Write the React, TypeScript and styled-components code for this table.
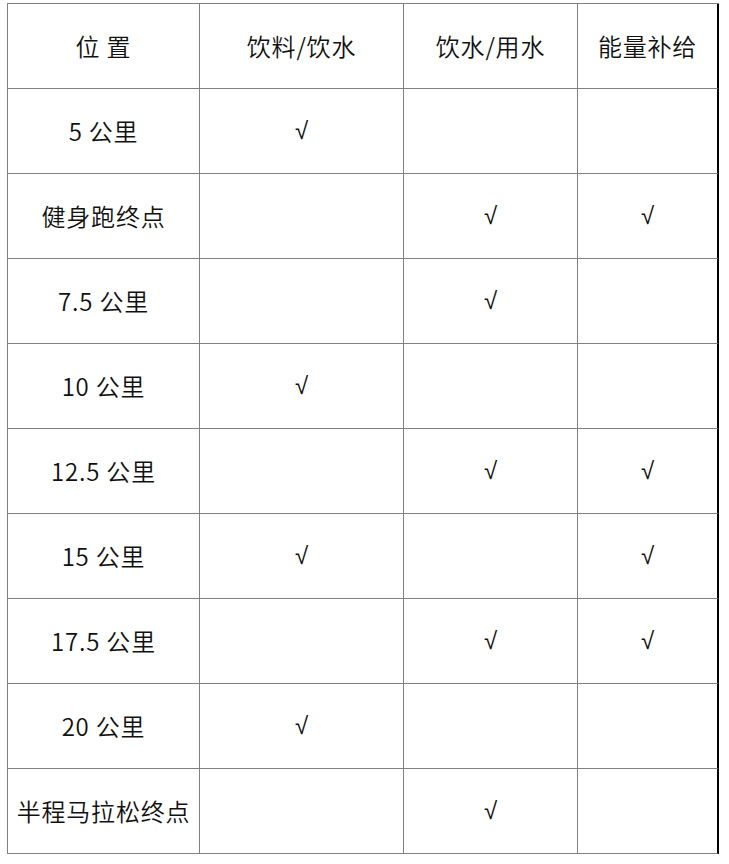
import React from "react";
import styled, { createGlobalStyle } from "styled-components";

const Global = createGlobalStyle`
  html, body { margin: 0; padding: 0; background: #fff; }
  body { font-family: "Noto Sans CJK SC", "Noto Sans", sans-serif; }
`;

const Page = styled.div`
  padding: 3px 0 0 7px;
`;

const Grid = styled.div`
  display: grid;
  grid-template-columns: 192px 204px 174px 141px;
  grid-auto-rows: 85px;
  width: max-content;
  border-left: 1px solid #808080;
  border-top: 1px solid #808080;
`;

const Cell = styled.div<{ $last?: boolean }>`
  display: flex;
  align-items: center;
  justify-content: center;
  box-sizing: border-box;
  border-bottom: 1px solid #808080;
  border-right: ${(p) => (p.$last ? "2px solid #000" : "1px solid #808080")};
  font-size: 24px;
  font-weight: 350;
  letter-spacing: 0.8px;
  line-height: 1;
  color: #111;
  white-space: pre;
`;

const Check = styled.span`
  font-family: "DejaVu Sans", sans-serif;
  font-size: 24px;
  letter-spacing: 0;
  color: #111;
`;

const header = ["位 置", "饮料/饮水", "饮水/用水", "能量补给"];
const rows: [string, boolean, boolean, boolean][] = [
  ["5 公里", true, false, false],
  ["健身跑终点", false, true, true],
  ["7.5 公里", false, true, false],
  ["10 公里", true, false, false],
  ["12.5 公里", false, true, true],
  ["15 公里", true, false, true],
  ["17.5 公里", false, true, true],
  ["20 公里", true, false, false],
  ["半程马拉松终点", false, true, false],
];

export default function App() {
  return (
    <Page>
      <Global />
      <Grid>
        {header.map((h, i) => (
          <Cell key={h} $last={i === 3}>
            {h}
          </Cell>
        ))}
        {rows.map((r) => (
          <React.Fragment key={r[0]}>
            <Cell>{r[0]}</Cell>
            {[r[1], r[2], r[3]].map((v, i) => (
              <Cell key={i} $last={i === 2}>
                {v ? <Check>√</Check> : null}
              </Cell>
            ))}
          </React.Fragment>
        ))}
      </Grid>
    </Page>
  );
}
